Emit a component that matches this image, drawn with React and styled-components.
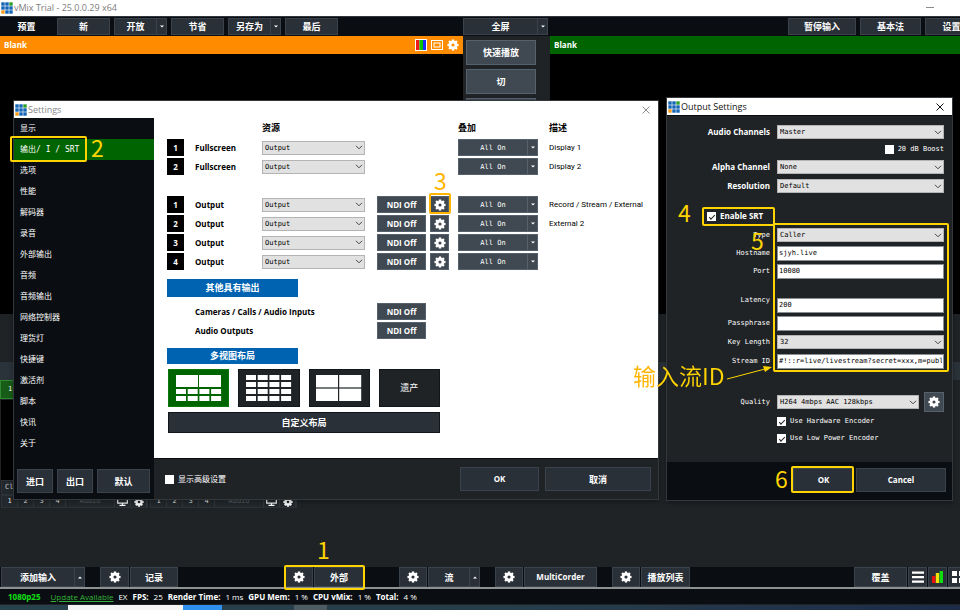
import styled, { createGlobalStyle, css } from "styled-components";

const GlobalStyle = createGlobalStyle`
  *,
  *::before,
  *::after {
    box-sizing: border-box;
  }

  html,
  body,
  #root {
    height: 100%;
  }

  body {
    margin: 0;
    overflow: hidden;
    background: #1f2326;
    color: #ffffff;
    font-family: "Open Sans", "Noto Sans CJK SC", sans-serif;
    font-size: 8px;
    line-height: 1.25;
  }

  button,
  input,
  select {
    margin: 0;
    font: inherit;
    color: inherit;
  }
`;

const mono = css`
  font-family: "DejaVu Sans Mono", "Noto Sans CJK SC", monospace;
  font-size: 7px;
  font-weight: 400;
`;

const Desktop = styled.div`
  position: relative;
  height: 100vh;
  overflow: hidden;
`;

// The main window is a little wider than the screen, as on the desktop
const MainWindow = styled.div`
  display: flex;
  flex-direction: column;
  width: calc(100% + 20px);
  height: 100%;
`;

const TitleBar = styled.header`
  display: flex;
  align-items: center;
  gap: 1px;
  height: 16px;
  padding-left: 1px;
  background: #ffffff;
  color: #7d7d7d;
`;

const TitleText = styled.h1`
  flex: 1;
  margin: 0;
  font-size: 9px;
  font-weight: 400;
`;

const WindowButton = styled.button`
  display: flex;
  align-items: center;
  justify-content: center;
  width: ${(props) => props.$width || 33}px;
  height: 100%;
  padding: 0;
  border: 0;
  background: none;
`;

const columns = css`
  display: grid;
  grid-template-columns: minmax(0, 463fr) 87px minmax(0, 430fr);
`;

const Toolbar = styled.div`
  ${columns}
  height: 20px;
  padding: 1px 0;
  border-top: 1px solid #30363b;
  background: #0a0e12;
`;

const ButtonGroup = styled.div`
  display: flex;
  gap: ${(props) => props.$gap || 0}px;
  justify-content: ${(props) => (props.$end ? "flex-end" : "flex-start")};
  padding-right: ${(props) => (props.$end ? 2 : 0)}px;
`;

const Tab = styled.button`
  width: 53px;
  padding: 0;
  border: 0;
  background: transparent;
  font-size: 9px;
  font-weight: 700;
`;

const Button = styled.button`
  display: flex;
  flex: none;
  align-items: center;
  justify-content: center;
  width: ${(props) => props.$width}px;
  height: ${(props) => props.$height || 17}px;
  padding: 0;
  border: 1px solid ${(props) => (props.$light ? "#55616c" : "#3a434c")};
  background: ${(props) => (props.$light ? "#404952" : "#2a3038")};
  color: #ffffff;
  font-size: ${(props) => (props.$latin ? 8 : 9)}px;
  font-weight: 700;
  line-height: 1;
  white-space: nowrap;
`;

const Split = styled.div`
  display: flex;

  & > button + button {
    border-left-width: 0;
  }
`;

const Panes = styled.div`
  ${columns}
  height: 278px;
`;

const Pane = styled.section`
  background: #000000;
`;

const PaneHeader = styled.div`
  display: flex;
  align-items: center;
  gap: 4px;
  height: 18px;
  padding: 0 4px;
  background: ${(props) => props.$color};
`;

const PaneTitle = styled.h2`
  flex: 1;
  margin: 0;
  font-size: 8px;
  font-weight: 700;
`;

const Transitions = styled.div`
  display: flex;
  flex-direction: column;
  gap: 4px;
  padding: 4px 3px;
`;

const InputTabs = styled.div`
  display: flex;
  align-items: flex-end;
  height: 37px;
  margin-top: 48px;
  background: linear-gradient(#2a323a 18px, #1f2326 18px);
`;

const InputTab = styled.button`
  width: 60px;
  height: 19px;
  padding: 0 0 0 7px;
  border: 1px solid #2f8a2f;
  background: #175c17;
  text-align: left;
  ${mono}
`;

const Inputs = styled.div`
  display: flex;
  gap: 2px;
  flex: 1;
  padding: 1px 1px 0;
`;

const InputCard = styled.article`
  width: 147px;
`;

const InputPreview = styled.div`
  height: 80px;
  background: #000000;
`;

const InputRow = styled.div`
  display: flex;
  align-items: center;
  height: ${(props) => props.$height}px;
  border: 1px solid #2c3237;
  background: #23282c;
  ${mono}
`;

const InputCell = styled.button`
  display: flex;
  flex: ${(props) => (props.$wide ? 1 : "none")};
  align-items: center;
  justify-content: center;
  width: 16px;
  height: 100%;
  padding: 0;
  border: 0;
  border-right: 1px solid #30363b;
  background: none;
  color: ${(props) => (props.$wide ? "#596066" : "#e4e6e7")};
`;

const CloseInput = styled.button`
  padding: 0 3px;
  border: 0;
  background: none;
  color: #c5c9cc;
`;

const BottomBar = styled.footer`
  display: flex;
  height: 20px;
  padding: 0 13px 0 1px;
  background: #0a0e12;
`;

const BottomGroup = styled.div`
  display: flex;
  gap: 1px;
  margin-left: ${(props) => (props.$push ? "auto" : `${props.$before || 0}px`)};
`;

const StatusBar = styled.div`
  display: flex;
  align-items: center;
  gap: 5px;
  height: 18px;
  padding: 0 8px;
  border-top: 2px solid #8e9192;
  border-bottom: 1px solid #1f2326;
  background: #0a0e12;
  white-space: nowrap;
`;

const Format = styled.strong`
  margin-right: 5px;
  color: #12e012;
`;

const UpdateLink = styled.a`
  color: #35b13a;
`;

const TaskBar = styled.div`
  display: grid;
  grid-template-columns: 68px 115px 39px 72px 33px 1fr;
  height: 5px;
  overflow: hidden;
  background: linear-gradient(90deg, #28424b, #263c4a 60%, #1c2a48);
`;

const Task = styled.span`
  background: ${(props) => props.$color};
`;

const Dialog = styled.section`
  position: absolute;
  left: ${(props) => props.$left}px;
  top: ${(props) => props.$top}px;
  display: flex;
  flex-direction: column;
  width: ${(props) => props.$width}px;
  border: 1px solid #33383c;
  background: #1f2326;
  box-shadow: 0 2px 5px rgba(0, 0, 0, 0.3);
`;

const DialogTitle = styled.header`
  display: flex;
  align-items: center;
  gap: 1px;
  height: 17px;
  padding-left: 1px;
  background: #ffffff;
  color: ${(props) => (props.$active ? "#111111" : "#8a8a8a")};
`;

const SettingsBody = styled.div`
  display: grid;
  grid-template-columns: 140px minmax(0, 1fr);
`;

const Sidebar = styled.div`
  display: flex;
  flex-direction: column;
  justify-content: space-between;
  background: #0a0e12;
`;

const NavItem = styled.button`
  display: block;
  width: 100%;
  height: 21px;
  padding: 0 6px;
  border: 0;
  background: ${(props) => (props.$active ? "#006400" : "transparent")};
  text-align: left;
  font-family: "DejaVu Sans Mono", "Noto Sans CJK SC", monospace;
  white-space: pre;
`;

const SidebarButtons = styled.div`
  display: flex;
  gap: 4px;
  padding: 0 3px 6px;
`;

const SettingsContent = styled.div`
  height: 340px;
  padding: 0 4px 0 13px;
  background: #ffffff;
  color: #000000;
`;

const OutputRow = styled.div`
  display: grid;
  grid-template-columns: 28px 67px 115px 53px 28px 91px minmax(0, 1fr);
  align-items: center;
  height: ${(props) => props.$height || 19}px;
  margin-top: ${(props) => props.$before || 0}px;
`;

const ColumnTitle = styled.strong`
  grid-column: ${(props) => props.$column};
  font-size: 9px;
`;

const OutputNumber = styled.span`
  width: 17px;
  height: 17px;
  background: #000000;
  color: #ffffff;
  font-weight: 700;
  line-height: 17px;
  text-align: center;
`;

const OutputName = styled.strong`
  grid-column: 2 / span ${(props) => props.$span || 1};
`;

const Description = styled.span`
  grid-column: 7;
  font-family: Roboto, sans-serif;
  white-space: nowrap;
`;

const AllOn = styled(Button)`
  padding-top: 1px;
  ${mono}
`;

const SelectBox = styled.div`
  display: grid;
  width: ${(props) => (props.$width ? `${props.$width}px` : "auto")};
  height: 14px;

  & > * {
    grid-area: 1 / 1;
  }

  & > svg {
    place-self: center end;
    margin-right: 2px;
    pointer-events: none;
  }
`;

const StyledSelect = styled.select`
  appearance: none;
  width: 100%;
  height: 14px;
  padding: 1px 12px 0 2px;
  border: 1px solid #b4b4b4;
  border-radius: 0;
  background: #e1e1e1;
  color: #000000;
  ${mono}
`;

const BlueTitle = styled.h3`
  width: 131px;
  height: ${(props) => props.$height}px;
  margin: 8px 0 5px;
  background: #0063b1;
  color: #ffffff;
  font-size: 9px;
  line-height: ${(props) => props.$height}px;
  text-align: center;
`;

const LayoutPicker = styled.div`
  display: grid;
  grid-template-columns: repeat(4, 1fr);
  gap: 5px 9px;
  width: 273px;
  padding-left: 1px;
`;

const LayoutButton = styled.button`
  display: grid;
  place-items: center;
  grid-column: ${(props) => (props.$wide ? "1 / -1" : "auto")};
  height: ${(props) => (props.$wide ? 21 : 38)}px;
  padding: 0;
  border: 1px solid ${(props) => (props.$active ? "#0a780a" : "#11161a")};
  background: ${(props) =>
    props.$active ? "#006400" : props.$wide ? "#2a3038" : "#1f2326"};
  color: #ffffff;
  font-size: 9px;
  font-weight: ${(props) => (props.$wide ? 700 : 400)};
`;

const SettingsFooter = styled.div`
  display: flex;
  align-items: center;
  gap: 6px;
  height: 41px;
  padding: 0 7px 0 11px;
  border-top: 1px solid #0a0e12;
`;

const CheckLabel = styled.label`
  display: flex;
  flex: ${(props) => (props.$grow ? 1 : "none")};
  align-items: center;
  gap: 4px;
  ${(props) => props.$mono && mono}
  font-weight: ${(props) => (props.$bold ? 700 : 400)};
`;

const Checkbox = styled.input`
  appearance: none;
  display: grid;
  place-items: center;
  width: 9px;
  height: 9px;
  background: #ffffff;

  &:checked::after {
    content: "";
    width: 6px;
    height: 3px;
    border: solid #222222;
    border-width: 0 0 1px 1px;
    transform: rotate(-45deg);
  }
`;

const Form = styled.form`
  display: flex;
  flex-direction: column;
`;

const FormBody = styled.div`
  padding: 7px 8px 16px 0;
  border-top: 1px solid #0a0e12;
`;

const Field = styled.div`
  display: grid;
  grid-template-columns: 103px minmax(0, 1fr);
  column-gap: 7px;
  align-items: ${(props) => (props.$raised ? "start" : "center")};
  height: ${(props) => props.$height || 18}px;
  margin-top: ${(props) => props.$before || 0}px;
`;

const FieldLabel = styled.label`
  text-align: right;
  font-weight: 700;
  ${(props) => props.$mono && mono}
`;

const FieldSlot = styled.div`
  display: flex;
  grid-column: 2;
  justify-content: ${(props) => (props.$end ? "flex-end" : "space-between")};
  align-items: center;
`;

const EnableSlot = styled.div`
  grid-column: 1 / -1;
  padding-left: 40px;
`;

const TextInput = styled.input`
  align-self: center;
  width: 100%;
  height: 15px;
  padding: 0 1px;
  border: 1px solid #8a8f93;
  background: #ffffff;
  color: #000000;
  ${mono}
`;

const FormFooter = styled.div`
  display: flex;
  justify-content: flex-end;
  gap: 2px;
  height: 38px;
  padding: 6px 6px 0;
  background: #0a0e12;
`;

const Mark = styled.div`
  position: absolute;
  left: ${(props) => props.$left}px;
  top: ${(props) => props.$top}px;
  width: ${(props) => props.$width}px;
  height: ${(props) => props.$height}px;
  border: 2px solid ${(props) => props.$color || "#ffd400"};
  border-radius: 2px;
  pointer-events: none;
`;

const Note = styled.span`
  position: absolute;
  left: ${(props) => props.$left}px;
  top: ${(props) => props.$top}px;
  color: ${(props) => props.$color || "#ffd400"};
  font-family: "Noto Sans CJK SC", "Noto Sans", sans-serif;
  font-size: 23px;
  line-height: 21px;
  white-space: nowrap;
  pointer-events: none;
`;

const SplitNote = styled(Note)`
  padding: 2px 0;
  color: transparent;
  background: linear-gradient(90deg, #ffb400 26px, #ffd400 26px);
  background-clip: text;
`;

const Arrow = styled.svg`
  position: absolute;
  left: 724px;
  top: 362px;
  pointer-events: none;
`;

const Logo = () => {
  const colors = [
    "#1565b5", "#1565b5", "#2ca02c",
    "#1565b5", "#1565b5", "#1565b5",
    "#f79a1c", "#1565b5", "#1565b5",
  ];
  return (
    <svg width="12" height="12" viewBox="0 0 12 12" aria-hidden="true">
      {colors.map((color, i) => (
        <rect
          key={i}
          x={(i % 3) * 4 + 0.3}
          y={Math.floor(i / 3) * 4 + 0.3}
          width="3.4"
          height="3.4"
          fill={color}
        />
      ))}
    </svg>
  );
};

const Gear = ({ size = 12 }) => (
  <svg width={size} height={size} viewBox="0 0 16 16" stroke="#ffffff" fill="none">
    <circle cx="8" cy="8" r="4" strokeWidth="3.8" />
    {[0, 45, 90, 135, 180, 225, 270, 315].map((angle) => (
      <path key={angle} d="M8 3V0.6" strokeWidth="3" transform={`rotate(${angle} 8 8)`} />
    ))}
  </svg>
);

const Caret = ({ up }) => (
  <svg width="4" height="3" viewBox="0 0 4 3">
    <path d={up ? "M0 2.5L2 0.5L4 2.5Z" : "M0 0.5L2 2.5L4 0.5Z"} fill="#ffffff" />
  </svg>
);

const Close = ({ color }) => (
  <svg width="8" height="8" viewBox="0 0 8 8" stroke={color} fill="none">
    <path d="M0.5 0.5L7.5 7.5M7.5 0.5L0.5 7.5" />
  </svg>
);

const ColorBars = () => (
  <svg width="12" height="12" viewBox="0 0 12 12">
    <rect width="12" height="12" fill="#ffffff" />
    <rect x="1" y="1" width="3.4" height="10" fill="#f01818" />
    <rect x="4.4" y="1" width="3.6" height="10" fill="#08c408" />
    <rect x="8" y="1" width="3" height="10" fill="#1c2cf0" />
  </svg>
);

const SafeArea = () => (
  <svg width="12" height="10" viewBox="0 0 12 10" fill="none" stroke="#ffffff">
    <rect x="0.5" y="0.5" width="11" height="9" />
    <rect x="3" y="3" width="6" height="4" />
  </svg>
);

const Monitor = () => (
  <svg width="11" height="9" viewBox="0 0 11 9" fill="none" stroke="#ffffff">
    <rect x="0.7" y="0.5" width="9.6" height="5.6" strokeWidth="1.2" />
    <path d="M5.5 6V8M2.5 8.3H8.5" strokeWidth="1.2" />
  </svg>
);

const layouts = {
  mixed: [
    [0, 0, 22, 12], [23, 0, 22, 12],
    ...[0, 1, 2, 3].flatMap((i) => [
      [i * 11.7, 14, 10, 5],
      [i * 11.7, 21, 10, 5],
    ]),
  ],
  sixteen: [0, 1, 2, 3].flatMap((row) =>
    [0, 1, 2, 3].map((col) => [col * 11.7, row * 7, 10, 5])
  ),
  four: [
    [0, 0, 22, 12.4], [23.2, 0, 22, 12.4],
    [0, 13.6, 22, 12.4], [23.2, 13.6, 22, 12.4],
  ],
};

const LayoutIcon = ({ cells }) => (
  <svg width="46" height="26" viewBox="0 0 46 26" fill="#ffffff">
    {cells.map(([x, y, width, height]) => (
      <rect key={`${x}-${y}`} x={x} y={y} width={width} height={height} />
    ))}
  </svg>
);

const Select = ({ id, label, value, width }) => (
  <SelectBox $width={width}>
    <StyledSelect id={id} aria-label={label} defaultValue={value}>
      <option>{value}</option>
    </StyledSelect>
    <svg width="8" height="5" viewBox="0 0 8 5" fill="none" stroke="#444444">
      <path d="M1 0.8L4 3.8L7 0.8" />
    </svg>
  </SelectBox>
);

const SplitButton = ({ label, width, height, up }) => (
  <Split>
    <Button $width={width} $height={height}>{label}</Button>
    <Button $width={10} $height={height} aria-label={`${label} ▾`}>
      <Caret up={up} />
    </Button>
  </Split>
);

const navItems = [
  "显示", "输出/ I / SRT", "选项", "性能", "解码器", "录音", "外部输出", "音频",
  "音频输出", "网络控制器", "理货灯", "快捷键", "激活剂", "脚本", "快讯", "关于",
];

const outputs = [
  { number: 1, name: "Fullscreen", description: "Display 1" },
  { number: 2, name: "Fullscreen", description: "Display 2" },
  { number: 1, name: "Output", ndi: true, before: 19, description: "Record / Stream / External" },
  { number: 2, name: "Output", ndi: true, description: "External 2" },
  { number: 3, name: "Output", ndi: true },
  { number: 4, name: "Output", ndi: true },
];

const stats = [
  ["FPS:", "25"],
  ["Render Time:", "1 ms"],
  ["GPU Mem:", "1 %"],
  ["CPU vMix:", "1 %"],
  ["Total:", "4 %"],
];

const SettingsDialog = () => (
  <Dialog $left={13} $top={100} $width={646}>
    <DialogTitle>
      <Logo />
      <TitleText as="h2">Settings</TitleText>
      <WindowButton $width={24} aria-label="Close">
        <Close color="#8a8a8a" />
      </WindowButton>
    </DialogTitle>
    <SettingsBody>
      <Sidebar>
        <nav>
          {navItems.map((item, i) => (
            <NavItem key={item} $active={i === 1}>{item}</NavItem>
          ))}
        </nav>
        <SidebarButtons>
          <Button $width={36} $height={24}>进口</Button>
          <Button $width={36} $height={24}>出口</Button>
          <Button $width={53} $height={24}>默认</Button>
        </SidebarButtons>
      </Sidebar>
      <div>
        <SettingsContent>
          <OutputRow $height={20}>
            <ColumnTitle $column={3}>资源</ColumnTitle>
            <ColumnTitle $column={6}>叠加</ColumnTitle>
            <ColumnTitle $column={7}>描述</ColumnTitle>
          </OutputRow>
          {outputs.map(({ number, name, ndi, before, description }) => (
            <OutputRow key={name + number} $before={before}>
              <OutputNumber>{number}</OutputNumber>
              <OutputName>{name}</OutputName>
              <Select label={`${name} ${number}`} value="Output" width={103} />
              {ndi ? <Button $light $latin $width={49}>NDI Off</Button> : <span />}
              {ndi ? (
                <Button $light $width={19} aria-label="Output settings"><Gear /></Button>
              ) : (
                <span />
              )}
              <Split>
                <AllOn $light $width={70}>All On</AllOn>
                <Button $light $width={10} aria-label="Overlays"><Caret /></Button>
              </Split>
              <Description>{description}</Description>
            </OutputRow>
          ))}
          <BlueTitle $height={18}>其他具有输出</BlueTitle>
          {["Cameras / Calls / Audio Inputs", "Audio Outputs"].map((name) => (
            <OutputRow key={name}>
              <OutputName $span={2}>{name}</OutputName>
              <Button $light $latin $width={49}>NDI Off</Button>
            </OutputRow>
          ))}
          <BlueTitle $height={16}>多视图布局</BlueTitle>
          <LayoutPicker>
            <LayoutButton $active aria-label="2 + 8"><LayoutIcon cells={layouts.mixed} /></LayoutButton>
            <LayoutButton aria-label="16"><LayoutIcon cells={layouts.sixteen} /></LayoutButton>
            <LayoutButton aria-label="4"><LayoutIcon cells={layouts.four} /></LayoutButton>
            <LayoutButton>遗产</LayoutButton>
            <LayoutButton $wide>自定义布局</LayoutButton>
          </LayoutPicker>
        </SettingsContent>
        <SettingsFooter>
          <CheckLabel $grow>
            <Checkbox type="checkbox" />
            显示高级设置
          </CheckLabel>
          <Button $latin $width={79} $height={24}>OK</Button>
          <Button $width={106} $height={24}>取消</Button>
        </SettingsFooter>
      </div>
    </SettingsBody>
  </Dialog>
);

const TextField = ({ id, label, value, before, raised }) => (
  <Field $before={before} $raised={raised}>
    <FieldLabel $mono htmlFor={id}>{label}</FieldLabel>
    <TextInput id={id} defaultValue={value} />
  </Field>
);

const SelectField = ({ id, label, value, before, plain }) => (
  <Field $before={before}>
    <FieldLabel $mono={plain} htmlFor={id}>{label}</FieldLabel>
    <Select id={id} value={value} />
  </Field>
);

const OutputSettingsDialog = () => (
  <Dialog $left={666} $top={97} $width={287}>
    <DialogTitle $active>
      <Logo />
      <TitleText as="h2">Output Settings</TitleText>
      <WindowButton $width={24} aria-label="Close">
        <Close color="#111111" />
      </WindowButton>
    </DialogTitle>
    <Form onSubmit={(e) => e.preventDefault()}>
      <FormBody>
        <SelectField id="audio" label="Audio Channels" value="Master" />
        <Field $height={16}>
          <FieldSlot $end>
            <CheckLabel $mono>
              <Checkbox type="checkbox" />
              20 dB Boost
            </CheckLabel>
          </FieldSlot>
        </Field>
        <SelectField id="alpha" label="Alpha Channel" value="None" before={1} />
        <SelectField id="resolution" label="Resolution" value="Default" before={1} />
        <Field $before={12}>
          <EnableSlot>
            <CheckLabel $bold>
              <Checkbox type="checkbox" defaultChecked />
              Enable SRT
            </CheckLabel>
          </EnableSlot>
        </Field>
        <SelectField plain id="type" label="Type" value="Caller" before={1} />
        <TextField id="hostname" label="Hostname" value="sjyh.live" />
        <TextField id="port" label="Port" value="10080" />
        <TextField raised id="latency" label="Latency" value="200" before={16} />
        <TextField id="passphrase" label="Passphrase" value="" />
        <SelectField plain id="key" label="Key Length" value="32" before={1} />
        <TextField
          id="stream"
          label="Stream ID"
          value="#!::r=live/livestream?secret=xxx,m=publish"
          before={1}
        />
        <Field $height={20} $before={22}>
          <FieldLabel $mono htmlFor="quality">Quality</FieldLabel>
          <FieldSlot>
            <Select id="quality" value="H264 4mbps AAC 128kbps" width={142} />
            <Button $light type="button" $width={20} $height={20} aria-label="Quality settings">
              <Gear />
            </Button>
          </FieldSlot>
        </Field>
        {["Use Hardware Encoder", "Use Low Power Encoder"].map((name) => (
          <Field key={name} $height={16} $before={1}>
            <FieldSlot>
              <CheckLabel $mono>
                <Checkbox type="checkbox" defaultChecked />
                {name}
              </CheckLabel>
            </FieldSlot>
          </Field>
        ))}
      </FormBody>
      <FormFooter>
        <Button $latin $width={61} $height={24}>OK</Button>
        <Button $latin type="button" $width={90} $height={24}>Cancel</Button>
      </FormFooter>
    </Form>
  </Dialog>
);

const Annotations = () => (
  <>
    <Mark $left={284} $top={565} $width={81} $height={25} />
    <Note $left={317} $top={539}>1</Note>
    <Mark $left={10} $top={136} $width={77} $height={26} />
    <Note $left={91} $top={137}>2</Note>
    <Mark $left={429} $top={193} $width={22} $height={21} $color="#ffb400" />
    <Note $left={434} $top={170} $color="#ffb400">3</Note>
    <Mark $left={702} $top={207} $width={73} $height={19} />
    <Note $left={678} $top={202}>4</Note>
    <Mark $left={773} $top={223} $width={176} $height={149} />
    <Note $left={751} $top={230}>5</Note>
    <Mark $left={791} $top={466} $width={63} $height={27} />
    <Note $left={775} $top={468}>6</Note>
    <SplitNote $left={633} $top={363}>输入流ID</SplitNote>
    <Arrow width="50" height="20" viewBox="0 0 50 20">
      <path d="M3 17L41 7" stroke="#ffd400" fill="none" />
      <path d="M48 5L39 4L41 10Z" fill="#ffd400" />
    </Arrow>
  </>
);

const GearButton = ({ width = 28 }) => (
  <Button $width={width} $height={20} aria-label="Settings"><Gear /></Button>
);

const App = () => (
  <Desktop>
    <GlobalStyle />
    <MainWindow>
      <TitleBar>
        <Logo />
        <TitleText>vMix Trial - 25.0.0.29 x64</TitleText>
        <WindowButton aria-label="Minimize">
          <svg width="8" height="8" viewBox="0 0 8 8" stroke="#8a8a8a"><path d="M0 3.5H8" /></svg>
        </WindowButton>
        <WindowButton aria-label="Maximize">
          <svg width="8" height="8" viewBox="0 0 8 8" stroke="#8a8a8a" fill="none">
            <rect x="0.5" y="0.5" width="7" height="7" />
          </svg>
        </WindowButton>
      </TitleBar>
      <Toolbar>
        <ButtonGroup $gap={4}>
          <Tab>预置</Tab>
          <Button $width={53}>新</Button>
          <SplitButton label="开放" width={43} />
          <Button $width={53}>节省</Button>
          <SplitButton label="另存为" width={43} />
          <Button $width={53}>最后</Button>
        </ButtonGroup>
        <SplitButton label="全屏" width={75} />
        <ButtonGroup $gap={4} $end>
          <Button $width={68}>暂停输入</Button>
          <Button $width={61}>基本法</Button>
          <Button $width={53}>设置</Button>
        </ButtonGroup>
      </Toolbar>
      <Panes>
        <Pane>
          <PaneHeader $color="#ff8c00">
            <PaneTitle>Blank</PaneTitle>
            <ColorBars />
            <SafeArea />
            <Gear />
          </PaneHeader>
        </Pane>
        <Transitions>
          <Button $light $width={70} $height={25}>快速播放</Button>
          <Button $light $width={70} $height={25}>切</Button>
          <Button $light $width={70} $height={25}>淡出</Button>
        </Transitions>
        <Pane>
          <PaneHeader $color="#006400">
            <PaneTitle>Blank</PaneTitle>
          </PaneHeader>
        </Pane>
      </Panes>
      <InputTabs>
        <InputTab>1</InputTab>
      </InputTabs>
      <Inputs>
        {[1, 2].map((input) => (
          <InputCard key={input}>
            <InputPreview />
            <InputRow $height={15}>
              <CloseInput>Close</CloseInput>
            </InputRow>
            <InputRow $height={13}>
              {[1, 2, 3, 4].map((n) => (
                <InputCell key={n}>{n}</InputCell>
              ))}
              <InputCell $wide>Audio</InputCell>
              <InputCell aria-label="Monitor"><Monitor /></InputCell>
              <InputCell aria-label="Settings"><Gear size={10} /></InputCell>
            </InputRow>
          </InputCard>
        ))}
      </Inputs>
      <BottomBar>
        <BottomGroup>
          <SplitButton up label="添加输入" width={74} height={20} />
        </BottomGroup>
        <BottomGroup $before={15}>
          <GearButton width={29} />
          <Button $width={48} $height={20}>记录</Button>
        </BottomGroup>
        <BottomGroup $before={107}>
          <GearButton />
          <Button $width={50} $height={20}>外部</Button>
        </BottomGroup>
        <BottomGroup $before={35}>
          <GearButton />
          <SplitButton up label="流" width={42} height={20} />
        </BottomGroup>
        <BottomGroup $before={15}>
          <GearButton />
          <Button $latin $width={73} $height={20}>MultiCorder</Button>
        </BottomGroup>
        <BottomGroup $before={15}>
          <GearButton />
          <Button $width={49} $height={20}>播放列表</Button>
        </BottomGroup>
        <BottomGroup $push>
          <Button $width={53} $height={20}>覆盖</Button>
          <Button $width={19} $height={20} aria-label="List">
            <svg width="12" height="12" viewBox="0 0 12 12" fill="#ffffff">
              <path d="M0 0.5H12V2.7H0ZM0 5H12V7.2H0ZM0 9.5H12V11.7H0Z" />
            </svg>
          </Button>
          <Button $width={19} $height={20} aria-label="Levels">
            <svg width="11" height="12" viewBox="0 0 11 12">
              <rect y="5" width="3.4" height="7" fill="#e81010" />
              <rect x="3.8" y="2" width="3.4" height="10" fill="#f2e20c" />
              <rect x="7.6" width="3.4" height="12" fill="#10dc10" />
            </svg>
          </Button>
          <Button $width={19} $height={20} aria-label="Grid">
            <svg width="12" height="12" viewBox="0 0 12 12" fill="#ffffff">
              <path d="M0 0H5V5H0ZM7 0H12V5H7ZM0 7H5V12H0ZM7 7H12V12H7Z" />
            </svg>
          </Button>
        </BottomGroup>
      </BottomBar>
      <StatusBar>
        <Format>1080p25</Format>
        <UpdateLink href="#update">Update Available</UpdateLink>
        <span>EX</span>
        {stats.map(([name, value]) => [
          <strong key={name}>{name}</strong>,
          <span key={`${name}-value`}>{value}</span>,
        ])}
      </StatusBar>
      <TaskBar>
        <Task />
        <Task $color="#f4f4f4" />
        <Task $color="#2f8fef" />
        <Task />
        <Task $color="#4d5b62" />
      </TaskBar>
    </MainWindow>
    <SettingsDialog />
    <OutputSettingsDialog />
    <Annotations />
  </Desktop>
);

export default App;
